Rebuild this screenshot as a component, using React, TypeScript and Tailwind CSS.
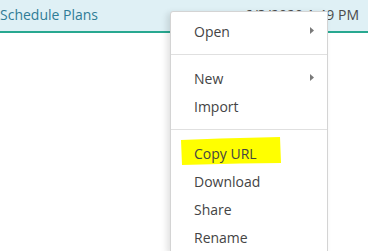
const GROUPS: { label: string; sub?: boolean }[][] = [
  [{ label: 'Open', sub: true }],
  [{ label: 'New', sub: true }, { label: 'Import' }],
  [{ label: 'Copy URL' }, { label: 'Download' }, { label: 'Share' }, { label: 'Rename' }],
]

function Caret() {
  return (
    <svg width="4" height="7" viewBox="0 0 4 7" className="absolute right-[13px] top-[10px]">
      <polygon points="0,0 4,3.5 0,7" fill="#7a7a7a" />
    </svg>
  )
}

export default function App() {
  return (
    <div className="relative w-[368px] h-[251px] overflow-hidden bg-white" style={{ fontFamily: '"Open Sans", sans-serif' }}>
      {/* list row */}
      <div className="flex items-center justify-between h-[33px] pb-[3px] pr-[9px] bg-[#dff0f5] border-b-2 border-[#28a890] text-[14px]">
        <span className="text-[#2f7c96]">Schedule Plans</span>
        <span className="text-[#4a4a4a]">6/3/2020 1:49 PM</span>
      </div>

      {/* context menu */}
      <div className="absolute left-[170px] top-[11px] w-[158px] bg-white border border-[#d4d4d4] rounded-tl-[3px] pt-[5px] shadow-[-3px_2px_6px_rgba(0,0,0,0.12)] text-[14px] text-[#444]">
        {GROUPS.map((group, gi) => (
          <div key={gi}>
            {gi > 0 && <div className="my-[9px] h-px bg-[#e0e0e0]" />}
            {group.map(item => (
              <div key={item.label} className="relative h-[28px] flex items-center pl-[23px]">
                {item.label === 'Copy URL' && (
                  <svg width="102" height="28" viewBox="0 0 102 28" className="absolute left-[9px] top-[-2px]">
                    <path d="M1,3 L40,1.5 L100,0 L101,26 L60,26.5 L2,28 Z" fill="#ffff00" />
                  </svg>
                )}
                <span className="relative">{item.label}</span>
                {item.sub && <Caret />}
              </div>
            ))}
          </div>
        ))}
      </div>
    </div>
  )
}
